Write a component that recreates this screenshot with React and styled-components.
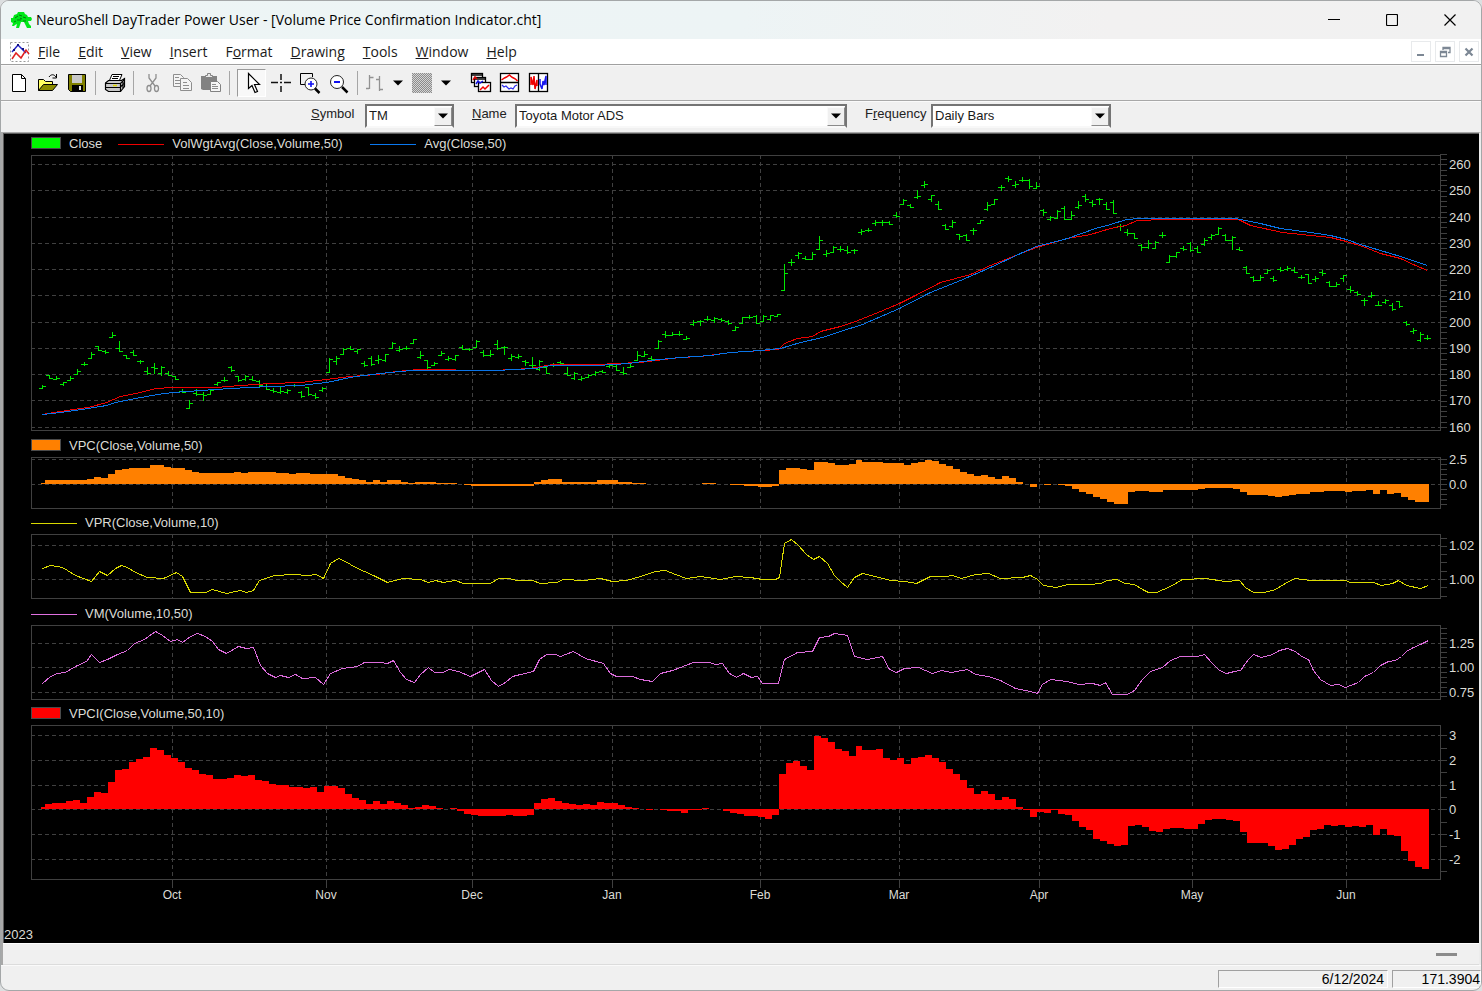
import React from "react";
import styled, { createGlobalStyle, css } from "styled-components";

const GlobalStyle = createGlobalStyle`
  *, *::before, *::after { box-sizing: border-box; }
  body { margin: 0; background: #dcdfe0; }
  button, select { font: inherit; color: inherit; }
`;

const UI_FONT = '"Liberation Sans", Arial, sans-serif';
const SYSTEM_FONT = '"Open Sans", "Segoe UI", sans-serif';

const AppWindow = styled.div`
  display: flex;
  flex-direction: column;
  min-height: 100vh;
  overflow: hidden;
  border: 1px solid #a4a7a8;
  border-radius: 9px;
  background: #f0f0f0;
  color: #000;
  font: 13px/16px ${UI_FONT};
`;

/* ---------- title bar ---------- */

const TitleBar = styled.header`
  display: flex;
  align-items: center;
  height: 38px;
  padding: 0 2px 0 9px;
  background: linear-gradient(90deg, #edf5f5 0%, #edf4f5 50%, #f2f1f1 75%, #f1f1f1 100%);
`;

const Title = styled.h1`
  flex: 1;
  margin: 0 0 0 4px;
  font: 400 14px/20px ${SYSTEM_FONT};
  white-space: nowrap;
`;

const CaptionButton = styled.button`
  display: grid;
  place-items: center;
  width: 58px;
  height: 38px;
  padding: 0;
  border: 0;
  background: transparent;
`;

/* ---------- menu bar ---------- */

const MenuBar = styled.nav`
  display: flex;
  align-items: center;
  height: 27px;
  padding: 0 2px 1px 9px;
  background: #fff;
  border-bottom: 1px solid #f8f8f8;
  box-shadow: inset 0 -1px 0 #a0a0a0;
`;

const MenuList = styled.div`
  display: flex;
  flex: 1;
  gap: 2px;
`;

const MenuButton = styled.button`
  padding: 0 8px;
  border: 0;
  background: transparent;
  font: 14px/22px ${SYSTEM_FONT};
  color: #1a1a1a;
`;

const ChildButtons = styled.div`
  display: flex;
  gap: 4px;
`;

const ChildButton = styled.button`
  display: grid;
  place-items: center;
  width: 20px;
  height: 21px;
  padding: 0;
  border: 1px solid #e8eaec;
  background: #fff;
`;

/* ---------- tool bar ---------- */

const ToolBar = styled.div`
  display: flex;
  align-items: center;
  height: 36px;
  padding: 0 0 2px 3px;
  border-bottom: 1px solid #fafafa;
  box-shadow: inset 0 -1px 0 #a8a8a8;
`;

const ToolButton = styled.button`
  display: grid;
  place-items: center;
  width: ${(p) => p.$width || 29}px;
  height: 28px;
  padding: 0;
  border: 1px solid transparent;
  background: transparent;
  ${(p) =>
    p.$pressed &&
    css`
      border-color: #9a9a9a #fff #fff #9a9a9a;
      background: #f8f8f8;
    `}
`;

const Separator = styled.span`
  width: 1px;
  height: 24px;
  margin: 0 ${(p) => p.$after || 4}px 0 4px;
  background: #a6a6a6;
`;

const ToolGroup = styled.div`
  display: flex;
  margin-left: ${(p) => p.$before || 0}px;
`;

/* ---------- symbol bar ---------- */

const SymbolBar = styled.form`
  display: flex;
  align-items: center;
  gap: 18px;
  height: 30px;
  padding: 0 0 3px 310px;
`;

const Field = styled.div`
  display: flex;
  align-items: center;
`;

const FieldLabel = styled.label`
  width: ${(p) => p.$width}px;
  padding-bottom: 3px;
  color: #222;
`;

const Combo = styled.div`
  position: relative;
  width: ${(p) => p.$width}px;
  height: 24px;
  border: 2px solid;
  border-color: #747474 #747474 #f8f8f8 #747474;
  background: #fff;
`;

const ComboSelect = styled.select`
  appearance: none;
  width: 100%;
  height: 20px;
  padding: 0 20px 0 2px;
  border: 0;
  background: transparent;
  outline: none;
  color: #1a1a1a;
  line-height: 20px;
`;

const ComboArrow = styled.span`
  position: absolute;
  top: 1px;
  right: 0;
  bottom: 0;
  display: grid;
  place-items: center;
  width: 18px;
  border: 1px solid;
  border-color: #fafafa #8a8a8a #8a8a8a #fafafa;
  background: #f0f0f0;
  pointer-events: none;
`;

/* ---------- chart document ---------- */

const Document = styled.main`
  display: flex;
  flex: 1;
  flex-direction: column;
  border: solid;
  border-width: 1px 2px 0 2px;
  border-color: #a8a8a8 #ececec #a8a8a8 #a8a8a8;
`;

const ChartArea = styled.section`
  display: flex;
  flex: 1;
  flex-direction: column;
  border: solid #5c5c5c;
  border-width: 1px 0 0 1px;
  background: #000;
  color: #dcdcd6;
`;

const Pane = styled.div`
  display: grid;
  grid-template-columns: minmax(0, 1fr) 38px;
  padding-left: 27px;
`;

const Legend = styled.div`
  grid-column: 1 / -1;
  display: flex;
  align-items: flex-end;
  gap: 16px;
  height: ${(p) => p.$height}px;
  padding-bottom: 3px;
`;

const LegendItem = styled.span`
  display: flex;
  align-items: center;
  gap: 8px;
  min-width: ${(p) => (p.$line ? 236 : 0)}px;
  line-height: 16px;
  white-space: nowrap;
`;

const AreaKey = styled.i`
  width: 30px;
  height: 12px;
  margin-bottom: 3px;
  border: 1px solid #4a4a4a;
  background: ${(p) => p.$color};
`;

const LineKey = styled.i`
  width: 46px;
  height: 1px;
  background: ${(p) => p.$color};
`;

const Plot = styled.svg`
  display: block;
  width: 100%;
  height: ${(p) => p.$height}px;
  shape-rendering: crispEdges;
`;

const Scale = styled.svg`
  display: block;
  width: 38px;
  height: ${(p) => p.$height}px;
  overflow: visible;
  fill: #dcdcd6;
  font-size: 13px;
  shape-rendering: crispEdges;
`;

const MonthAxis = styled.svg`
  display: block;
  width: 100%;
  height: 26px;
  overflow: visible;
  fill: #dcdcd6;
  font-size: 12px;
  shape-rendering: crispEdges;
`;

const YearLabel = styled.div`
  margin-top: auto;
`;

const ScrollStrip = styled.div`
  display: flex;
  align-items: center;
  justify-content: flex-end;
  height: 22px;
  padding-right: 22px;
  border-top: 1px solid #fff;
  border-bottom: 1px solid #dcdcdc;
`;

const ScrollThumb = styled.span`
  width: 21px;
  height: 3px;
  background: #8b8b8b;
`;

const StatusBar = styled.footer`
  display: flex;
  justify-content: flex-end;
  gap: 4px;
  height: 25px;
  padding-top: 4px;
  border-top: 1px solid #fafafa;
`;

const StatusCell = styled.span`
  width: ${(p) => p.$width}px;
  height: 18px;
  padding-right: ${(p) => p.$pad || 0}px;
  border: 1px solid;
  border-color: #a0a0a0 #fff #fff #a0a0a0;
  font-size: 14px;
  line-height: 17px;
  text-align: right;
`;

/* ---------- chart data ---------- */

const LEFT = 31;
const WIDTH = 1410;
const GRID = "#404040";

const MONTHS = [
  ["Oct", 172], ["Nov", 326], ["Dec", 472], ["Jan", 612], ["Feb", 760],
  ["Mar", 899], ["Apr", 1039], ["May", 1192], ["Jun", 1346],
];

// Each bar: high, low, open, close, stored at three steps to the pixel.
const BARS = `766 775 775 770|735 745 737 745|740 748 748 745|757 765 763 757|740 752 750 746|718 733 733 725|698 705 703 703|668 685 685 673|650 662 650 662|660 670 665 667|608 622 622 617|635 665 655 665|677 685 677 685|661 677 668 677|690 700 695 695|713 732 725 730|700 730 711 716|710 735 730 713|725 737 730 735|738 747 738 747|778 787 783 786|812 835 835 820|778 795 790 792|786 812 793 797|780 793 793 782|757 765 763 757|743 755 750 752|710 723 713 722|738 755 740 752|736 750 747 740|738 752 748 750|752 768 755 765|762 778 768 777|775 787 780 785|772 790 788 783|778 790 787 782|762 770 765 767|783 802 787 800|772 795 772 793|790 805 795 802|772 783 782 775|685 727 727 687|680 703 695 686|655 673 673 658|648 658 655 657|658 670 665 658|695 708 700 706|680 705 685 703|676 700 690 688|673 693 690 673|638 655 655 640|648 664 660 657|648 657 656 655|628 640 640 628|663 685 682 675|690 715 690 712|697 707 705 700|663 677 677 670|680 690 688 685|677 690 688 677|645 658 652 657|655 660 657 658|630 652 652 635|660 680 668 677|660 680 675 672|630 657 642 655|650 672 652 653|672 690 685 678|672 685 682 678|690 705 693 696|683 712 705 705|692 720 717 695|710 730 712 730|700 708 705 704|695 702 697 699|712 735 730 735|728 748 745 730|740 750 748 745|733 743 743 737|725 735 733 728|720 728 725 727|705 713 710 707|707 722 710 720|713 732 727 730|700 712 712 710|665 690 690 677|665 680 678 673|680 692 685 688|632 655 655 635|603 622 613 617|608 617 616 612|604 617 612 614|618 628 627 625|572 587 583 577|570 585 575 573|560 572 568 567|562 577 572 565|565 575 568 572|570 583 573 580|590 600 600 592|562 580 580 563|557 565 562 561|557 580 560 580|557 575 575 560|557 570 568 557|553 560 558 553|403 482 482 430|388 405 398 397|368 385 375 370|378 388 386 387|367 387 387 373|320 358 358 332|362 380 374 370|350 368 368 352|350 363 358 358|350 370 362 367|358 370 362 362|298 314 306 305|294 305 302 300|270 287 280 277|270 286 277 278|275 283 277 283|248 262 255 258|208 223 223 212|222 232 227 231|182 205 202 199|155 172 165 163|197 213 208 197|215 238 223 238|283 298 285 297|271 293 288 277|313 327 314 318|313 332 315 332|295 312 302 302|270 280 280 272|218 240 238 227|208 224 222 209|165 180 173 172|138 155 146 147|154 173 167 162|143 153 152 150|148 175 150 170|158 176 175 170|238 257 240 246|258 272 268 262|240 265 265 245|230 268 235 268|245 268 268 257|215 235 233 227|192 213 200 207|210 228 217 223|205 222 208 208|218 238 222 237|212 250 217 250|283 300 288 290|297 315 307 310|310 325 310 325|343 360 345 352|332 355 353 340|335 355 355 337|308 323 316 317|375 397 397 378|366 382 380 368|350 360 355 357|338 363 340 360|348 367 355 366|325 345 342 332|312 327 323 317|293 312 312 296|313 330 315 330|320 358 332 322|353 362 357 362|410 430 412 430|440 455 442 450|435 450 450 442|418 430 430 422|440 453 445 452|413 425 419 421|408 422 418 415|413 427 420 426|436 446 441 443|432 460 433 460|440 453 448 445|420 437 427 430|455 470 457 468|458 470 470 463|435 453 445 437|470 487 478 482|485 495 488 494|505 525 512 512|488 502 500 497|515 527 525 525|507 520 517 512|520 540 525 537|515 532 515 530|575 585 577 583|595 610 605 600|608 633 632 613|615 627 625 625`
  .split("|")
  .map((bar) => bar.split(" ").map((v) => 130 + Math.floor(v / 3)));

const BAR_PATH = BARS.map(([high, low, open, close], i) => {
  const x = Math.floor(42.7 + i * 6.996);
  return `M${x - 3} ${open + 0.5}H${x + 0.5}M${x + 0.5} ${high}V${low + 1}M${x} ${close + 0.5}H${x + 4}`;
}).join("");

const AVG = "42,414 60,412 88,408 106,405 115,402 135,398 157,394 173,392 200,390 230,388 270,386 300,385 326,382 355,376 380,373 400,371 412,370 494,370 535,368 550,365 597,365 628,363 650,360 680,357 710,355 730,352 760,350 780,348 800,342 822,337 840,331 862,324 899,308 930,292 960,280 990,267 1020,253 1036,246 1067,238 1095,228 1110,224 1126,219 1140,218 1235,218 1260,223 1280,228 1310,232 1330,235 1346,239 1360,244 1380,250 1400,256 1427,265";
const VOL_AVG = "42,414 60,411 80,408 88,407 106,402 120,396 140,392 155,388 173,387 215,387 240,385 270,383 300,382 326,379 350,376 376,374 396,371 418,369 450,369 460,370 494,370 530,368 552,364 598,364 615,363 640,362 655,360 680,357 700,356 730,352 762,350 778,349 784,343 797,338 812,336 820,331 840,326 855,321 880,311 899,303 915,295 940,282 970,274 990,265 1010,257 1036,247 1067,238 1090,234 1110,228 1125,225 1137,220 1165,219 1238,219 1250,225 1282,232 1310,235 1330,237 1346,241 1365,247 1380,253 1400,258 1415,265 1427,270";
const VPR = "42,568 50,565 62,567 67,570 75,575 83,578 91,581 99,571 107,575 115,568 121,565 127,567 135,572 147,577 163,578 176,572 182,576 190,592 205,592 212,589 226,593 240,590 246,592 253,590 259,580 274,575 293,574 307,575 316,574 323,578 330,563 338,558 345,561 355,567 373,575 387,582 402,578 420,579 428,582 435,580 443,582 455,580 463,583 490,583 498,578 508,578 517,580 532,580 540,583 556,582 563,579 583,580 600,578 612,581 626,580 640,576 655,571 665,570 675,574 686,578 700,576 720,579 735,576 750,577 762,579 775,579 779,577 784,543 791,539 798,545 806,554 813,559 819,556 827,563 834,575 840,581 847,587 854,577 862,573 875,576 890,580 905,581 916,583 930,576 945,576 952,575 961,578 975,574 988,573 1000,578 1022,577 1030,575 1037,579 1043,585 1055,587 1068,584 1090,584 1100,583 1107,580 1116,579 1125,583 1134,584 1142,589 1148,592 1156,592 1170,586 1182,579 1205,578 1225,581 1239,580 1245,587 1253,592 1264,592 1275,589 1288,581 1295,578 1310,580 1345,580 1350,582 1373,582 1381,585 1392,583 1398,580 1406,585 1420,588 1428,585";
const VM = "42,683 50,676 57,673 65,672 75,666 86,661 91,654 99,662 107,659 117,654 127,650 134,643 144,639 155,631 162,635 170,641 177,639 182,642 190,636 197,633 205,636 212,641 218,649 226,653 233,649 238,646 246,648 253,647 260,665 267,673 275,677 280,675 288,677 295,674 302,678 315,677 323,684 330,673 342,668 357,666 364,662 380,662 387,663 393,660 400,672 406,679 414,682 420,674 428,667 434,672 442,672 449,669 458,671 470,676 484,669 491,680 498,686 505,682 512,676 520,674 533,671 539,659 546,654 555,654 560,656 573,651 585,658 603,663 610,673 616,676 632,676 640,679 652,681 660,673 672,670 680,667 693,662 709,662 715,664 722,663 729,673 736,677 743,673 751,677 757,676 762,683 778,683 784,659 797,652 812,651 819,637 828,636 834,633 841,634 847,635 854,656 867,659 882,656 889,669 896,672 904,668 918,667 932,673 941,670 951,672 967,669 975,674 988,676 1000,680 1015,688 1030,691 1037,693 1042,684 1050,679 1067,681 1078,684 1092,683 1100,685 1105,682 1112,694 1127,694 1134,690 1142,679 1150,671 1162,667 1170,660 1180,656 1197,656 1204,654 1211,662 1219,670 1226,673 1234,671 1240,670 1248,659 1253,654 1261,657 1272,654 1279,650 1287,648 1295,651 1301,656 1308,659 1313,670 1320,679 1330,685 1338,684 1345,687 1358,682 1364,676 1373,672 1380,665 1388,661 1395,660 1401,656 1406,651 1413,647 1420,644 1428,640";

// Column tops, "value*count" for runs, at three steps to the pixel.
const VPC = "158 151*6 148 140 144 132 121 118 113*3 106*2 110 114*2 121 125 129*5 125 129 125*4 129*2 132 128*2 133*4 138 144 148 151 155 151 155 151*2 155 158 155*3 159*3 163 165 168*9 155 151 147*2 155*5 151*3 155*2 159*2 163*8 159*2 163*2 165*2 168*2 172*2 168 121 114*2 118 121 95*2 98 106*2 102 91 95*3 98*3 106 99 96 91 94 102 109 117 125 132 139 136 140 147 139 143 155 163 172 163 165 163 165 169 176 187 191 202 206 217 221*2 187 184*2 187*2 180*5 176 173*4 176 187 194*3 199 202 199 195 191*2 187*2 184*3 187 184*2 180 191 180 191 188 202 210 217*2";
const VPCI = "320 312 308 308 304 301 308 290 275 278 245 211 208 185 178 171 143 151 166 173 185 204 211 223 226 237 237 233 226 229 226 240 244 252 256 256 260 260 264 260 275 259 259 263 282 293 301 312 304 312 304 308 316 323 320 316 319 323 328 323 333 341 345 349*4 345 349 349 345 309 297 293 304 308 312 316 312 316 305 308 308 316 320 324 328 330 328 330 333 333 338 330 330 323 328 328 334 338 342 349 349 352 356 345 222 188 184 199 210 109 113 125 147 154 169 139 151 151 147 173 181 173 192 173 170 166 173 185 207 222 241 263 282 274 282 301 290 297 320 330 352 335 338 331 341 345 364 382 390 416 424 431 438 435 379 376 382 394 397 387 383 383 386 386 371 360 357 357 360 364 397 428*3 438 450 446 435 417 412 390 387 376 379 376 382 379 382 376 405 387 405 408 454 484 502 507";

function columnPath(runs, origin, zero) {
  const values = runs.split(" ").flatMap((run) => {
    const [value, count = 1] = run.split("*").map(Number);
    return Array(count).fill(value);
  });
  const base = origin + Math.round(zero / 3);
  let path = "";
  values.forEach((value, i) => {
    const y = origin + Math.round(value / 3);
    if (y === base) return;
    const from = i === 0 ? 41 : Math.round(44.9 + (i - 1) * 6.988);
    const to = Math.round(44.9 + i * 6.988);
    path += `M${from} ${base}V${y}H${to}V${base}Z`;
  });
  return path;
}

const ticks = (start, step, count) =>
  Array.from({ length: count }, (_, i) => Math.round(start + i * step));

const PANES = [
  {
    id: "price", top: 155, height: 276, legendHeight: 21,
    legend: [["area", "#00f800", "Close"], ["line", "#f00000", "VolWgtAvg(Close,Volume,50)"], ["line", "#0a78f0", "Avg(Close,50)"]],
    grid: [[164, "260"], [190, "250"], [217, "240"], [243, "230"], [269, "220"], [295, "210"], [322, "200"], [348, "190"], [374, "180"], [400, "170"], [427, "160"]],
    ticks: ticks(153.9, 5.25, 53),
  },
  {
    id: "vpc", top: 457, height: 52, legendHeight: 26,
    legend: [["area", "#ff8000", "VPC(Close,Volume,50)"]],
    grid: [[459, "2.5"], [484, "0.0"]],
    ticks: ticks(459.4, 4.95, 10),
  },
  {
    id: "vpr", top: 534, height: 65, legendHeight: 25,
    legend: [["line", "#d8d800", "VPR(Close,Volume,10)"]],
    grid: [[545, "1.02"], [579, "1.00"]],
    ticks: ticks(537.5, 8.3, 8),
  },
  {
    id: "vm", top: 625, height: 75, legendHeight: 26,
    legend: [["line", "#e070e0", "VM(Volume,10,50)"]],
    grid: [[643, "1.25"], [667, "1.00"], [692, "0.75"]],
    ticks: ticks(627.8, 4.9, 15),
  },
  {
    id: "vpci", top: 725, height: 155, legendHeight: 25,
    legend: [["area", "#ff0000", "VPCI(Close,Volume,50,10)"]],
    grid: [[735, "3"], [760, "2"], [785, "1"], [809, "0"], [834, "-1"], [859, "-2"]],
    ticks: ticks(735.2, 12.35, 12),
  },
];

const Trace = ({ points, color }) => (
  <polyline points={points} transform="translate(0.5 0.5)" fill="none" stroke={color} vectorEffect="non-scaling-stroke" />
);

const SERIES = {
  price: (
    <>
      <path d={BAR_PATH} fill="none" stroke="#00e800" vectorEffect="non-scaling-stroke" />
      <Trace points={VOL_AVG} color="#ee0000" />
      <Trace points={AVG} color="#0a74e8" />
    </>
  ),
  vpc: <path d={columnPath(VPC, 430, 163)} fill="#ff8000" />,
  vpr: <Trace points={VPR} color="#dcdc00" />,
  vm: <Trace points={VM} color="#dc6cdc" />,
  vpci: <path d={columnPath(VPCI, 700, 328)} fill="#ff0000" />,
};

function ChartPane({ pane }) {
  const bottom = pane.top + pane.height;
  return (
    <Pane>
      <Legend $height={pane.legendHeight}>
        {pane.legend.map(([kind, color, text]) => (
          <LegendItem key={text} $line={kind === "line"}>
            {kind === "area" ? <AreaKey $color={color} /> : <LineKey $color={color} />}
            {text}
          </LegendItem>
        ))}
      </Legend>
      <Plot $height={pane.height} viewBox={`${LEFT} ${pane.top} ${WIDTH} ${pane.height}`} preserveAspectRatio="none">
        <g stroke={GRID} strokeDasharray="4 3" fill="none">
          {pane.grid.map(([y]) => (
            <line key={y} x1={LEFT} x2={LEFT + WIDTH} y1={y + 0.5} y2={y + 0.5} vectorEffect="non-scaling-stroke" />
          ))}
          {MONTHS.map(([name, x]) => (
            <line key={name} x1={x + 0.5} x2={x + 0.5} y1={pane.top} y2={bottom} vectorEffect="non-scaling-stroke" />
          ))}
        </g>
        <rect x={LEFT + 0.5} y={pane.top + 0.5} width={WIDTH - 1} height={pane.height - 1} fill="none" stroke={GRID} vectorEffect="non-scaling-stroke" />
        {SERIES[pane.id]}
      </Plot>
      <Scale $height={pane.height} viewBox={`1441 ${pane.top} 38 ${pane.height}`}>
        {pane.ticks.map((y) => (
          <line key={y} x1="1440" x2="1447" y1={y + 0.5} y2={y + 0.5} stroke={GRID} />
        ))}
        {pane.grid.map(([y, text]) => (
          <text key={text} x="1449" y={y + 5}>{text}</text>
        ))}
      </Scale>
    </Pane>
  );
}

/* ---------- icons ---------- */

const Icon = ({ children, w = 24, h = 24 }) => (
  <svg width={w} height={h} viewBox={`0 0 ${w} ${h}`} fill="none" aria-hidden="true">{children}</svg>
);

const TurtleIcon = () => (
  <Icon w={22} h={18}>
    <path d="M3 7l1-3 3-1 1-2h6l1 2 2 1 1 2h3l1 2-1 2h-3l1 3 2 2v2h-4l-2-4-1-2h-3l-1 3-1 3H6l1-4-2 1-1 1H2l1-3-2-1V7z" fill="#00e818" />
    <path d="M5 7l3-2M9 4l3 1M7 9h4M13 6l3 1M13 10h3M4 11l2-1M10 7l2 1" stroke="#057a10" />
  </Icon>
);

const DocumentIcon = () => (
  <Icon w={20} h={20}>
    <rect x="0.5" y="0.5" width="18" height="19" fill="#fff" stroke="#999" strokeDasharray="2 2" />
    <path d="M2 10l6-7 5 5 3 3" stroke="#2424c8" strokeWidth="1.5" />
    <path d="M2 17l4-6 5 5 5-8 3 4" stroke="#e02020" strokeWidth="1.5" />
    <path d="M7 2h2v2H7zM3 7h2v2H3zM12 6h2v2h-2z" fill="#101080" />
  </Icon>
);

const NewIcon = () => (
  <Icon><path d="M5.5 3.5h9l4 4v13h-13z" fill="#fff" stroke="#000" /><path d="M14.5 3.5v4h4" stroke="#000" /></Icon>
);

const OpenIcon = () => (
  <Icon>
    <path d="M2.5 19.5v-11h5l2 2h7v3" fill="#ffff60" stroke="#000" />
    <path d="M2.5 19.5l5-6h14l-5 6z" fill="#8c8c00" stroke="#000" />
    <path d="M13 6c2-3 5-3 7 0M20.5 3v4h-4" stroke="#000" />
  </Icon>
);

const SaveIcon = () => (
  <Icon>
    <path d="M3.5 3.5h17v17h-15l-2-2z" fill="#808000" stroke="#000" />
    <path d="M7 4h10v8H7z" fill="#c8c8c8" />
    <path d="M7 14h11v6H7z" fill="#000" />
    <path d="M14 15h2v4h-2z" fill="#e8e8e8" />
  </Icon>
);

const PrintIcon = () => (
  <Icon>
    <path d="M9 3.5h10l-3 7H6z" fill="#fff" stroke="#000" />
    <path d="M10 5.5h6M9 7.5h6" stroke="#000" />
    <path d="M2.5 12l3-2.5h13l3-2v8l-4 5h-12l-3-2z" fill="#c8c8c8" stroke="#000" strokeWidth="1.2" />
    <path d="M2.5 12.5h15l4-4M3 16.5h14l4-4M17.5 12.5v8M20 11v6" stroke="#000" strokeWidth="1.2" />
    <path d="M10 14.5h4" stroke="#e0d800" strokeWidth="1.5" />
  </Icon>
);

const CutIcon = () => (
  <Icon>
    <g stroke="#8e8e8e" strokeWidth="1.3">
      <path d="M8 3v4l6 8M15 3v4l-6 8" />
      <ellipse cx="8" cy="17.5" rx="2" ry="3" /><ellipse cx="15.5" cy="17.5" rx="2" ry="3" />
    </g>
  </Icon>
);

const CopyIcon = () => (
  <Icon>
    <g fill="#f4f4f4" stroke="#8e8e8e">
      <path d="M3.5 3.5h7l3 3v9h-10z" /><path d="M10.5 7.5h7l4 4v8h-11z" />
    </g>
    <path d="M5 6.500h4M5 9.500h5M5 12.500h5M13 11.500h4M13 14.500h6M13 17.500h6" stroke="#8e8e8e" />
  </Icon>
);

const PasteIcon = () => (
  <Icon>
    <path d="M2 5h16v14H4l-2-1z" fill="#828282" /><path d="M6.5 6.500v-2h2v-2h3v2h2v2z" fill="#e8e8e8" stroke="#828282" />
    <path d="M11.5 10.500h7l3 3v7h-10z" fill="#f6f6f6" stroke="#828282" /><path d="M13 13.500h4M13 15.500h6M13 17.500h6" stroke="#8e8e8e" />
  </Icon>
);

const PointerIcon = () => (
  <Icon><path d="M8.5 2.500v15l3.500-3 3 7 2.500-1-3-7h5z" fill="#fff" stroke="#000" strokeWidth="1.2" /></Icon>
);

const CrosshairIcon = () => (
  <Icon><path d="M12 3v6M12 15v6M2 11.500h7M15 11.500h7M11 11.500h2" stroke="#111" strokeWidth="1.5" /></Icon>
);

const ZoomInIcon = () => (
  <Icon>
    <path d="M8 13.500H2.500v-11h12V6" stroke="#000" />
    <circle cx="13" cy="13" r="6" fill="#fff" stroke="#222" />
    <path d="M13 10v6M10 13h6" stroke="#1010f0" strokeWidth="1.6" />
    <path d="M17 17.500l4.500 4.500" stroke="#000" strokeWidth="2.5" />
  </Icon>
);

const ZoomOutIcon = () => (
  <Icon>
    <circle cx="10" cy="11" r="6.5" fill="#fff" stroke="#222" />
    <path d="M7 11h6" stroke="#1010f0" strokeWidth="2" />
    <path d="M15 16l5.500 5.500" stroke="#000" strokeWidth="2.5" />
  </Icon>
);

const BarsIcon = () => (
  <Icon><path d="M6.500 4v14M3 17.500h3M7 6.500h3.500M16.500 5v15M13 8.500h3M17 18.500h3" stroke="#929292" strokeWidth="1.3" /></Icon>
);

const HatchIcon = () => (
  <Icon>
    <defs>
      <pattern id="hatch" width="2" height="2" patternUnits="userSpaceOnUse">
        <path d="M0 0h1v1H0zM1 1h1v1H1z" fill="#8c8c8c" />
      </pattern>
    </defs>
    <rect x="2" y="2" width="20" height="20" fill="#d4d4d4" /><rect x="2" y="2" width="20" height="20" fill="url(#hatch)" />
  </Icon>
);

const DownIcon = () => (
  <Icon w={10} h={6}><path d="M0 0.500h10L5 5.500z" fill="#000" /></Icon>
);

const CascadeIcon = () => (
  <Icon>
    <g fill="#fff" stroke="#000" strokeWidth="1.3">
      <rect x="2.5" y="2.5" width="11" height="9" /><path d="M3 4h10" />
      <rect x="5.5" y="6.5" width="11" height="9" /><path d="M6 8h10" />
      <rect x="9.5" y="11.5" width="12" height="9" />
    </g>
    <path d="M4 9l2-3 2 2" stroke="#e00000" strokeWidth="1.5" /><path d="M7 13l2-3 2 2 3-2" stroke="#1010e0" strokeWidth="1.5" />
    <path d="M11 19l3-3 2 2 4-4" stroke="#f00000" strokeWidth="1.5" />
  </Icon>
);

const StackedIcon = () => (
  <Icon>
    <rect x="2.5" y="2.5" width="18" height="18" fill="#fff" stroke="#000" strokeWidth="1.3" /><path d="M3 11.500h18" stroke="#000" strokeWidth="1.3" />
    <path d="M3.500 9l3-2 2-1 3-2 2 2 2 1 2 1 2 2" stroke="#f00000" strokeWidth="1.5" />
    <path d="M4 14l2 2 2-1 3 3 2-1 2 1 2-3 2-1" stroke="#3030f0" strokeWidth="1.2" />
  </Icon>
);

const SideBySideIcon = () => (
  <Icon>
    <rect x="2.5" y="2.5" width="18" height="18" fill="#fff" stroke="#000" strokeWidth="1.3" /><path d="M11.500 3v18" stroke="#000" strokeWidth="1.3" />
    <path d="M4 14V6l2 8 1-9 1 13 2-9v6" stroke="#f00000" strokeWidth="1.5" />
    <path d="M13 8v5l2 5 1-8 1 4 2-9v9" stroke="#1818f0" strokeWidth="1.5" />
  </Icon>
);

const MENUS = [["", "F", "ile"], ["", "E", "dit"], ["", "V", "iew"], ["", "I", "nsert"], ["F", "o", "rmat"], ["", "D", "rawing"], ["", "T", "ools"], ["", "W", "indow"], ["", "H", "elp"]];

const Tool = ({ label, icon, width, pressed }) => (
  <ToolButton type="button" aria-label={label} aria-pressed={pressed} $width={width} $pressed={pressed}>{icon}</ToolButton>
);

function ComboField({ id, before, accessKey, after, labelWidth, width, value }) {
  return (
    <Field>
      <FieldLabel htmlFor={id} $width={labelWidth}>{before}<u>{accessKey}</u>{after}</FieldLabel>
      <Combo $width={width}>
        <ComboSelect id={id} defaultValue={value}><option>{value}</option></ComboSelect>
        <ComboArrow><DownIcon /></ComboArrow>
      </Combo>
    </Field>
  );
}

export default function App() {
  return (
    <AppWindow>
      <GlobalStyle />
      <TitleBar>
        <TurtleIcon />
        <Title>NeuroShell DayTrader Power User - [Volume Price Confirmation Indicator.cht]</Title>
        <CaptionButton aria-label="Minimize"><Icon w={12} h={12}><path d="M0 5.500h12" stroke="#000" /></Icon></CaptionButton>
        <CaptionButton aria-label="Maximize"><Icon w={12} h={12}><rect x="0.5" y="0.5" width="11" height="11" rx="1" stroke="#000" strokeWidth="1.2" /></Icon></CaptionButton>
        <CaptionButton aria-label="Close"><Icon w={12} h={12}><path d="M0.500 0.500l11 11M11.500 0.500l-11 11" stroke="#000" strokeWidth="1.2" /></Icon></CaptionButton>
      </TitleBar>

      <MenuBar>
        <DocumentIcon />
        <MenuList>
          {MENUS.map(([before, key, after]) => (
            <MenuButton key={key + after} type="button">{before}<u>{key}</u>{after}</MenuButton>
          ))}
        </MenuList>
        <ChildButtons>
          <ChildButton aria-label="Minimize chart"><Icon w={12} h={12}><path d="M2 9h7" stroke="#7c8794" strokeWidth="2" /></Icon></ChildButton>
          <ChildButton aria-label="Restore chart">
            <Icon w={12} h={12}><path d="M4 4V1.500h7v5H9M4 2.500h7M1.500 5.500h6v5h-6zM1.500 6.500h6" stroke="#7c8794" strokeWidth="1.3" /></Icon>
          </ChildButton>
          <ChildButton aria-label="Close chart"><Icon w={12} h={12}><path d="M2.500 2.500l7 7M9.500 2.500l-7 7" stroke="#7c8794" strokeWidth="2.2" /></Icon></ChildButton>
        </ChildButtons>
      </MenuBar>

      <ToolBar role="toolbar">
        <Tool label="New" icon={<NewIcon />} />
        <Tool label="Open" icon={<OpenIcon />} />
        <Tool label="Save" icon={<SaveIcon />} />
        <Separator />
        <Tool label="Print" icon={<PrintIcon />} />
        <Separator />
        <Tool label="Cut" icon={<CutIcon />} />
        <Tool label="Copy" icon={<CopyIcon />} />
        <Tool label="Paste" icon={<PasteIcon />} />
        <Separator $after={7} />
        <Tool label="Select" icon={<PointerIcon />} pressed />
        <Tool label="Crosshair" icon={<CrosshairIcon />} />
        <Tool label="Zoom in" icon={<ZoomInIcon />} />
        <Tool label="Zoom out" icon={<ZoomOutIcon />} />
        <Separator />
        <Tool label="Bar style" icon={<BarsIcon />} width={26} />
        <Tool label="Bar style options" icon={<DownIcon />} width={20} />
        <Tool label="Fill pattern" icon={<HatchIcon />} width={28} />
        <Tool label="Fill pattern options" icon={<DownIcon />} width={20} />
        <ToolGroup $before={10}>
          <Tool label="Cascade charts" icon={<CascadeIcon />} />
          <Tool label="Stack charts" icon={<StackedIcon />} />
          <Tool label="Tile charts" icon={<SideBySideIcon />} />
        </ToolGroup>
      </ToolBar>

      <SymbolBar>
        <ComboField id="symbol" accessKey="S" after="ymbol" labelWidth={54} width={89} value="TM" />
        <ComboField id="name" accessKey="N" after="ame" labelWidth={43} width={332} value="Toyota Motor ADS" />
        <ComboField id="frequency" before="F" accessKey="r" after="equency" labelWidth={66} width={180} value="Daily Bars" />
      </SymbolBar>

      <Document>
        <ChartArea>
          {PANES.map((pane) => <ChartPane key={pane.id} pane={pane} />)}
          <Pane>
            <MonthAxis>
              {MONTHS.map(([name, x]) => {
                const at = `${((x - LEFT) / WIDTH) * 100}%`;
                return (
                  <g key={name}>
                    <line x1={at} x2={at} y1="0" y2="8" stroke={GRID} />
                    <text x={at} y="19" textAnchor="middle">{name}</text>
                  </g>
                );
              })}
            </MonthAxis>
          </Pane>
          <YearLabel>2023</YearLabel>
        </ChartArea>
        <ScrollStrip><ScrollThumb /></ScrollStrip>
      </Document>

      <StatusBar>
        <StatusCell $width={170} $pad={3}>6/12/2024</StatusCell>
        <StatusCell $width={89}>171.3904</StatusCell>
      </StatusBar>
    </AppWindow>
  );
}
